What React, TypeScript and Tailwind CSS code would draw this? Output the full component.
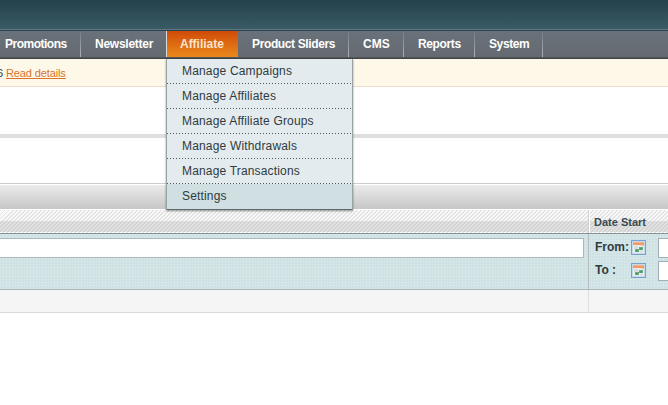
import type { ReactNode } from 'react';

const navItems = [
  { label: 'Promotions', width: 'w-[81px]', pad: 'pl-[5px]', track: 'tracking-[-0.5px]' },
  { label: 'Newsletter', width: 'w-[86px]', pad: 'pl-[14px]', track: 'tracking-[-0.25px]' },
  { label: 'Affiliate', width: 'w-[71px]', pad: 'pl-[13px]', track: 'tracking-[-0.02px]', active: true },
  { label: 'Product Sliders', width: 'w-[111px]', pad: 'pl-[14px]', track: 'tracking-[-0.37px]' },
  { label: 'CMS', width: 'w-[55px]', pad: 'pl-[14px]', track: 'tracking-normal' },
  { label: 'Reports', width: 'w-[71px]', pad: 'pl-[14px]', track: 'tracking-[-0.37px]' },
  { label: 'System', width: 'w-[68px]', pad: 'pl-[14px]', track: 'tracking-[-0.4px]' },
];

const menuItems = [
  'Manage Campaigns',
  'Manage Affiliates',
  'Manage Affiliate Groups',
  'Manage Withdrawals',
  'Manage Transactions',
  'Settings',
];

function NavBar() {
  return (
    <nav className="relative flex h-[29px] border-t border-[#2b454f] bg-linear-to-b from-[#69717a] to-[#646a70]">
      {navItems.map((item, i) => (
        <div
          key={item.label}
          className={`relative flex h-[27px] shrink-0 items-start pt-[5px] text-[12px] leading-[16px] font-bold whitespace-nowrap ${item.width} ${item.pad} ${item.track} ${
            item.active
              ? 'bg-linear-to-b from-[#cf4a08] to-[#eb8b1c] text-[#fbe3cd]'
              : 'text-white'
          }`}
        >
          {item.label}
          {!item.active && (
            <span
              className={`absolute top-0 right-0 h-[27px] w-px ${
                navItems[i + 1]?.active ? 'bg-[#d9dadb]' : 'bg-linear-to-b from-[#737b82] to-[#b3b7ba]'
              }`}
            />
          )}
        </div>
      ))}
      <div className="absolute inset-x-0 bottom-0 h-[2px] bg-linear-to-b from-[#5a5d5f] to-[#393d3d]" />
      <ul className="absolute top-[28px] left-[166px] z-10 w-[187px] border-x border-b border-[#9aa3a4] border-b-[#5e6b6d] bg-[#e3ebee] shadow-[0_1px_2px_rgba(0,0,0,0.4)]">
        {menuItems.map((label, i) => (
          <li
            key={label}
            className={`h-[25px] pl-[15px] text-[12px] leading-[25px] tracking-[0.17px] text-[#2f3b40] ${
              i === menuItems.length - 1
                ? 'bg-[#d0dfe2]'
                : 'bg-[repeating-linear-gradient(90deg,#4b585d_0_1px,transparent_1px_3px)] bg-[length:100%_1px] bg-bottom bg-no-repeat'
            }`}
          >
            {label}
          </li>
        ))}
      </ul>
    </nav>
  );
}

function CalendarIcon() {
  return (
    <svg width="15" height="15" viewBox="0 0 15 15" className="mt-[2px] shrink-0" shapeRendering="crispEdges">
      <rect width="15" height="15" fill="#7b9fce" />
      <rect x="1" y="1" width="13" height="13" fill="#c5d9ee" />
      <rect x="2" y="2" width="11" height="11" fill="#e8ecea" />
      <rect x="2" y="2" width="11" height="3" fill="#f39a63" />
      <rect x="2" y="2" width="11" height="1" fill="#f5b183" />
      <rect x="10" y="5" width="3" height="1" fill="#f5c7a4" />
      <rect x="3" y="6" width="4" height="3" fill="#d5dfdc" />
      <rect x="8" y="7" width="4" height="3" fill="#6aab80" />
      <rect x="9" y="8" width="2" height="2" fill="#4e9b68" />
      <rect x="4" y="9" width="4" height="3" fill="#6aab80" />
      <rect x="5" y="10" width="2" height="2" fill="#4e9b68" />
      <rect x="9" y="11" width="3" height="1" fill="#cfdcd6" />
    </svg>
  );
}

function DateRow({ label, children }: { label: string; children?: ReactNode }) {
  return (
    <div className="flex h-[20px] items-start">
      <span className="w-[36px] shrink-0 text-[12px] leading-[18px] font-bold whitespace-nowrap text-[#2f3b40]">{label}</span>
      <CalendarIcon />
      {children}
      <div className="ml-[12px] h-[20px] w-[40px] shrink-0 border border-[#9fafb5] bg-white" />
    </div>
  );
}

export default function App() {
  return (
    <div className="h-[405px] w-[668px] overflow-hidden bg-white font-['Liberation_Sans',Arial,sans-serif]">
      <header className="h-[30px] border-b border-[#607780] bg-linear-to-b from-[#24424c] to-[#3a5a65]" />
      <NavBar />
      <div className="flex h-[28px] items-start border-b border-[#ecdccb] bg-[#fef8e9] pt-[6px] text-[11px] leading-[16px] text-[#2f2f2f]">
        <span className="-ml-[3px] w-[9px]">6</span>
        <a className="tracking-[-0.12px] text-[#d9732b] underline">Read details</a>
      </div>
      <div className="h-[51px] border-b-4 border-[#dfdfdf]" />
      <div className="h-[46px] border-b border-[#cccccc]" />
      <div className="h-[26px] border-y border-white bg-linear-to-b from-[#ebebeb] to-[#c7c7c7]" />

      <div className="flex h-[24px] border-b border-[#849194] bg-[repeating-linear-gradient(135deg,rgba(175,175,175,0.3)_0_1.41px,transparent_1.41px_2.83px),linear-gradient(#fafafa_0_11px,#e2e2e2_11px_22px,#fff_22px)]">
        <div className="w-[589px] shrink-0 border-r border-[#d1cfcf]" />
        <div className="flex-1 border-l border-white pt-[4px] pl-[4px] text-[11px] leading-[16px] font-bold whitespace-nowrap text-[#394b53]">
          Date Start
        </div>
      </div>

      <div className="flex h-[56px] border-b border-[#aab5b8] bg-[#d0dfe3] bg-[linear-gradient(90deg,rgba(213,237,235,0.55)_1px,transparent_1px),linear-gradient(rgba(213,237,235,0.55)_1px,transparent_1px)] bg-[length:3px_3px]">
        <div className="w-[589px] shrink-0 border-r border-[#b2bfc3] pt-[4px]">
          <div className="h-[20px] w-[584px] border-y border-r border-[#aab8bd] bg-white" />
        </div>
        <div className="flex flex-1 flex-col gap-[3px] overflow-hidden pt-[4px] pl-[6px]">
          <DateRow label="From:" />
          <DateRow label="To :" />
        </div>
      </div>

      <div className="flex h-[23px] border-b border-[#dadada] bg-[#f5f5f5]">
        <div className="w-[589px] shrink-0 border-r border-[#dadfe0]" />
      </div>
    </div>
  );
}
